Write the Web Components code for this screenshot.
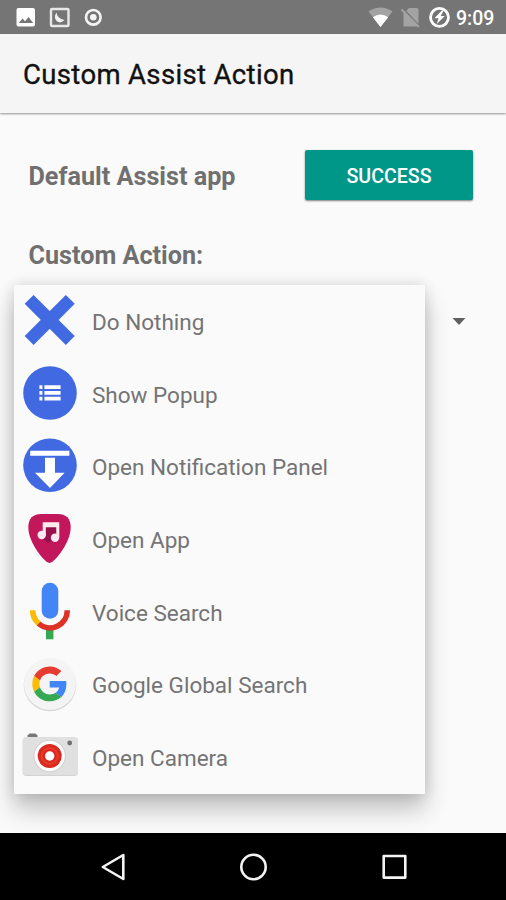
<!DOCTYPE html>
<html lang="en">
<head>
<meta charset="utf-8">
<title>Custom Assist Action</title>
<style>
html,body{margin:0;height:100%;overflow:hidden;background:#fafafa}
body{font-family:Roboto,sans-serif}
</style>
</head>
<body>
<assist-screen></assist-screen>
<script>
const define = (name, html) => customElements.define(name, class extends HTMLElement {
  constructor() {
    super();
    this.attachShadow({ mode: 'open' }).innerHTML = html;
  }
});

const ICONS = {
  close: '<g transform="translate(35.7 35)" fill="#4169e1"><rect x="-29.1" y="-6.3" width="58.2" height="12.6" transform="rotate(45)"/><rect x="-29.1" y="-6.3" width="58.2" height="12.6" transform="rotate(-45)"/></g>',
  list: '<circle cx="36" cy="35" r="26.8" fill="#4169e1"/><path fill="#fff" d="M25.4 27.300h3v3.7h-3zM30.4 27.300h16.200v3.7H30.4zM25.4 33h3v3.7h-3zM30.4 33h16.200v3.7H30.4zM25.4 38.700h3v3.7h-3zM30.4 38.700h16.200v3.7H30.4z"/>',
  down: '<circle cx="36" cy="35.300" r="26.8" fill="#4169e1"/><path fill="#fff" d="M16.2 20.8h39.2v5H16.2zM31 27.8h10v15h9.6L36 58 21 42.800h10z"/>',
  music: '<path fill="#c2185b" d="M14.300 24Q14.500 11.200 27 11H44Q56.500 11.200 56.700 24C56.700 38 45 53 38.500 58.800Q35.500 61 32.500 58.800C26 53 14.300 38 14.300 24Z"/><path fill="#97124b" d="M31 23h11v12l-8 5-6-5z"/><g fill="#fbeaf0"><circle cx="27.700" cy="32" r="4.200"/><circle cx="41" cy="34.800" r="4.200"/><path d="M28.700 19.300h16.600v15.300h-3V24.200H31.800v8.200h-3.100z"/></g>',
  mic: '<rect x="27.700" y="6.700" width="16.600" height="36" rx="8.300" fill="#4285f4"/><path fill="#34a853" d="M32 53h7.400v10.300H32z"/><g fill="none" stroke-width="5.600"><path stroke="#fbbc05" d="M18.700 34.300A17.300 17.300 0 0 0 24.600 47.500"/><path stroke="#dd3327" d="M24.600 47.500A17.300 17.300 0 0 0 53.300 34.300"/></g>',
  google: '<circle cx="36" cy="36" r="26.300" fill="#d5d5d5"/><circle cx="36" cy="35" r="26" fill="#f4f4f4"/><g transform="translate(18.300 17.500) scale(.726)"><path fill="#e53b30" d="M24 9.500c3.540 0 6.710 1.220 9.210 3.600l6.850-6.850C35.900 2.380 30.470 0 24 0 14.620 0 6.510 5.380 2.560 13.220l7.980 6.190C12.430 13.720 17.740 9.500 24 9.500z"/><path fill="#4285f4" d="M46.980 24.550c0-1.570-.15-3.090-.38-4.550H24v9.020h12.940c-.58 2.960-2.260 5.480-4.780 7.180l7.730 6c4.510-4.180 7.090-10.360 7.090-17.650z"/><path fill="#fbbc05" d="M10.530 28.590c-.48-1.450-.76-2.990-.76-4.590s.27-3.140.76-4.590l-7.980-6.190C.92 16.460 0 20.120 0 24c0 3.880.92 7.540 2.560 10.780l7.970-6.190z"/><path fill="#34a853" d="M24 48c6.480 0 11.930-2.130 15.890-5.810l-7.730-6c-2.150 1.450-4.920 2.300-8.160 2.300-6.260 0-11.570-4.220-13.470-9.910l-7.980 6.190C6.510 42.620 14.620 48 24 48z"/></g>',
  camera: '<path fill="#777" d="M13.500 17v-2.500l2-2h6l2 2V17z"/><rect x="8.700" y="16.300" width="55.300" height="38.700" rx="4" fill="#cfcfcf"/><rect x="8.700" y="16" width="55.300" height="38.300" rx="4" fill="#e0e0e0"/><circle cx="35.700" cy="35" r="16.200" fill="#d0d0d0"/><circle cx="35.700" cy="35" r="15.200" fill="#fbfbfb"/><circle cx="35.700" cy="35" r="12" fill="#d82a20"/><circle cx="35.700" cy="35" r="8" fill="none" stroke="#e83a2a" stroke-width="2"/><circle cx="35.700" cy="35" r="4.700" fill="#fff"/><circle cx="55.700" cy="22" r="2.400" fill="#707070"/>'
};

define('status-bar', `
<style>
:host{display:flex;height:34px;background:#757575;color:#fff;align-items:center}
svg{display:block;flex:none}
.grow{flex:1}
span{font:500 19.500px/34px Roboto,sans-serif;width:50px;padding-top:3px}
</style>
<svg width="110" height="34">
  <rect x="16.500" y="8" width="18.500" height="18.500" rx="2" fill="#fff"/>
  <path fill="#757575" d="M18.800 23l3.700-4.500 2.500 2.800 3.500-4.300 4.700 6z"/>
  <rect x="51" y="9" width="17.500" height="17" rx="1" fill="none" stroke="#e8e8e8" stroke-width="2.400"/>
  <path fill="#f0f0f0" d="M56.500 12.500Q57 18.500 64.500 20Q60.500 24 56.800 21.300 53 17.500 56.500 12.500z"/>
  <circle cx="93.300" cy="17.300" r="7.300" fill="none" stroke="#f4f4f4" stroke-width="2.600"/>
  <circle cx="93.300" cy="17.300" r="3.300" fill="#f4f4f4"/>
</svg>
<div class="grow"></div>
<svg width="89" height="34" viewBox="367 0 89 34">
  <path fill="#a3a3a3" d="M368.500 11.500Q380.500 3.500 392.500 11.500L380.500 27z"/>
  <path fill="#fff" d="M372.800 17.200Q380.500 12 388.200 17.200L380.500 27z"/>
  <path fill="#a3a3a3" d="M403.500 13.500L409 8h7.500q2 0 2 2v16.500h-15z"/>
  <path stroke="#757575" stroke-width="2" d="M403 9l17 18"/>
  <path stroke="#a3a3a3" stroke-width="2" d="M401.500 9.500l17.500 17.500"/>
  <circle cx="439.500" cy="17.300" r="9" fill="none" stroke="#fff" stroke-width="2.800"/>
  <path fill="#fff" d="M441.800 10.500l-7.300 7.800h4l-1.700 5.700 8-8h-4.100l3-5.500z"/>
</svg>
<span>9:09</span>`);

define('app-bar', `
<style>
:host{display:flex;height:79px;box-sizing:border-box;align-items:center;padding:3px 0 0 23px;background:#f5f5f5;color:#111;box-shadow:0 1px 2px rgba(0,0,0,.42);position:relative;font:400 27.500px/32px Roboto,sans-serif;letter-spacing:.35px;-webkit-text-stroke:.35px #111}
</style><slot></slot>`);

define('raised-button', `
<style>
:host{display:flex;width:168px;height:50px;align-items:center;justify-content:center;background:#009688;color:#fff;border-radius:2px;box-shadow:0 1px 2px rgba(0,0,0,.5);font:500 19.600px/24px Roboto,sans-serif;padding-top:3px;box-sizing:border-box}
</style><slot></slot>`);

define('section-label', `
<style>:host{display:block;color:#707070;font:700 25.200px/30px Roboto,sans-serif}</style><slot></slot>`);

customElements.define('action-item', class extends HTMLElement {
  constructor() {
    super();
    this.attachShadow({ mode: 'open' }).innerHTML = `
<style>
:host{display:flex;flex:1;align-items:center;color:#747474;font:400 22.500px/28px Roboto,sans-serif}
svg{display:block;flex:none;overflow:visible}
span{padding-top:1px}
</style>
<svg width="78" height="72.670" viewBox="0 0 78 72.670">${ICONS[this.getAttribute('icon')]}</svg>
<span><slot></slot></span>`;
  }
});

define('action-menu', `
<style>
:host{display:flex;flex-direction:column;width:411px;height:509px;background:#fafafa;border-radius:1px;box-shadow:0 15px 24px rgba(0,0,0,.24),0 0 14px rgba(0,0,0,.13)}
</style><slot></slot>`);

define('nav-bar', `
<style>
:host{display:flex;height:67px;background:#000;position:relative}
svg{display:block}
</style>
<svg width="506" height="67" fill="none" stroke="#f4f4f4" stroke-width="2.600" stroke-linejoin="round">
  <path d="M102.800 34L123.300 22v24z"/><circle cx="253.500" cy="34" r="12.200"/><rect x="383.700" y="23" width="21.600" height="21.600"/>
</svg>`);

define('assist-screen', `
<style>
:host{display:flex;flex-direction:column;width:506px;height:900px;background:#fafafa;overflow:hidden}
main{flex:1;display:flex;flex-direction:column;min-height:0}
.row{display:flex;justify-content:space-between;align-items:center;padding:37px 33px 0 28.500px}
.row section-label{padding-top:4px}
.second{padding:41px 0 0 28.500px}
.spinner{display:flex;align-items:flex-start;padding:14px 0 0 14px}
.arrow{margin:33px 0 0 27px}
</style>
<status-bar></status-bar>
<app-bar>Custom Assist Action</app-bar>
<main>
  <div class="row"><section-label>Default Assist app</section-label><raised-button>SUCCESS</raised-button></div>
  <section-label class="second">Custom Action:</section-label>
  <div class="spinner">
    <action-menu>
      <action-item icon="close">Do Nothing</action-item>
      <action-item icon="list">Show Popup</action-item>
      <action-item icon="down">Open Notification Panel</action-item>
      <action-item icon="music">Open App</action-item>
      <action-item icon="mic">Voice Search</action-item>
      <action-item icon="google">Google Global Search</action-item>
      <action-item icon="camera">Open Camera</action-item>
    </action-menu>
    <svg class="arrow" width="14" height="8"><path fill="#616161" d="M.500 0h13L7 7z"/></svg>
  </div>
</main>
<nav-bar></nav-bar>`);
</script>
</body>
</html>
